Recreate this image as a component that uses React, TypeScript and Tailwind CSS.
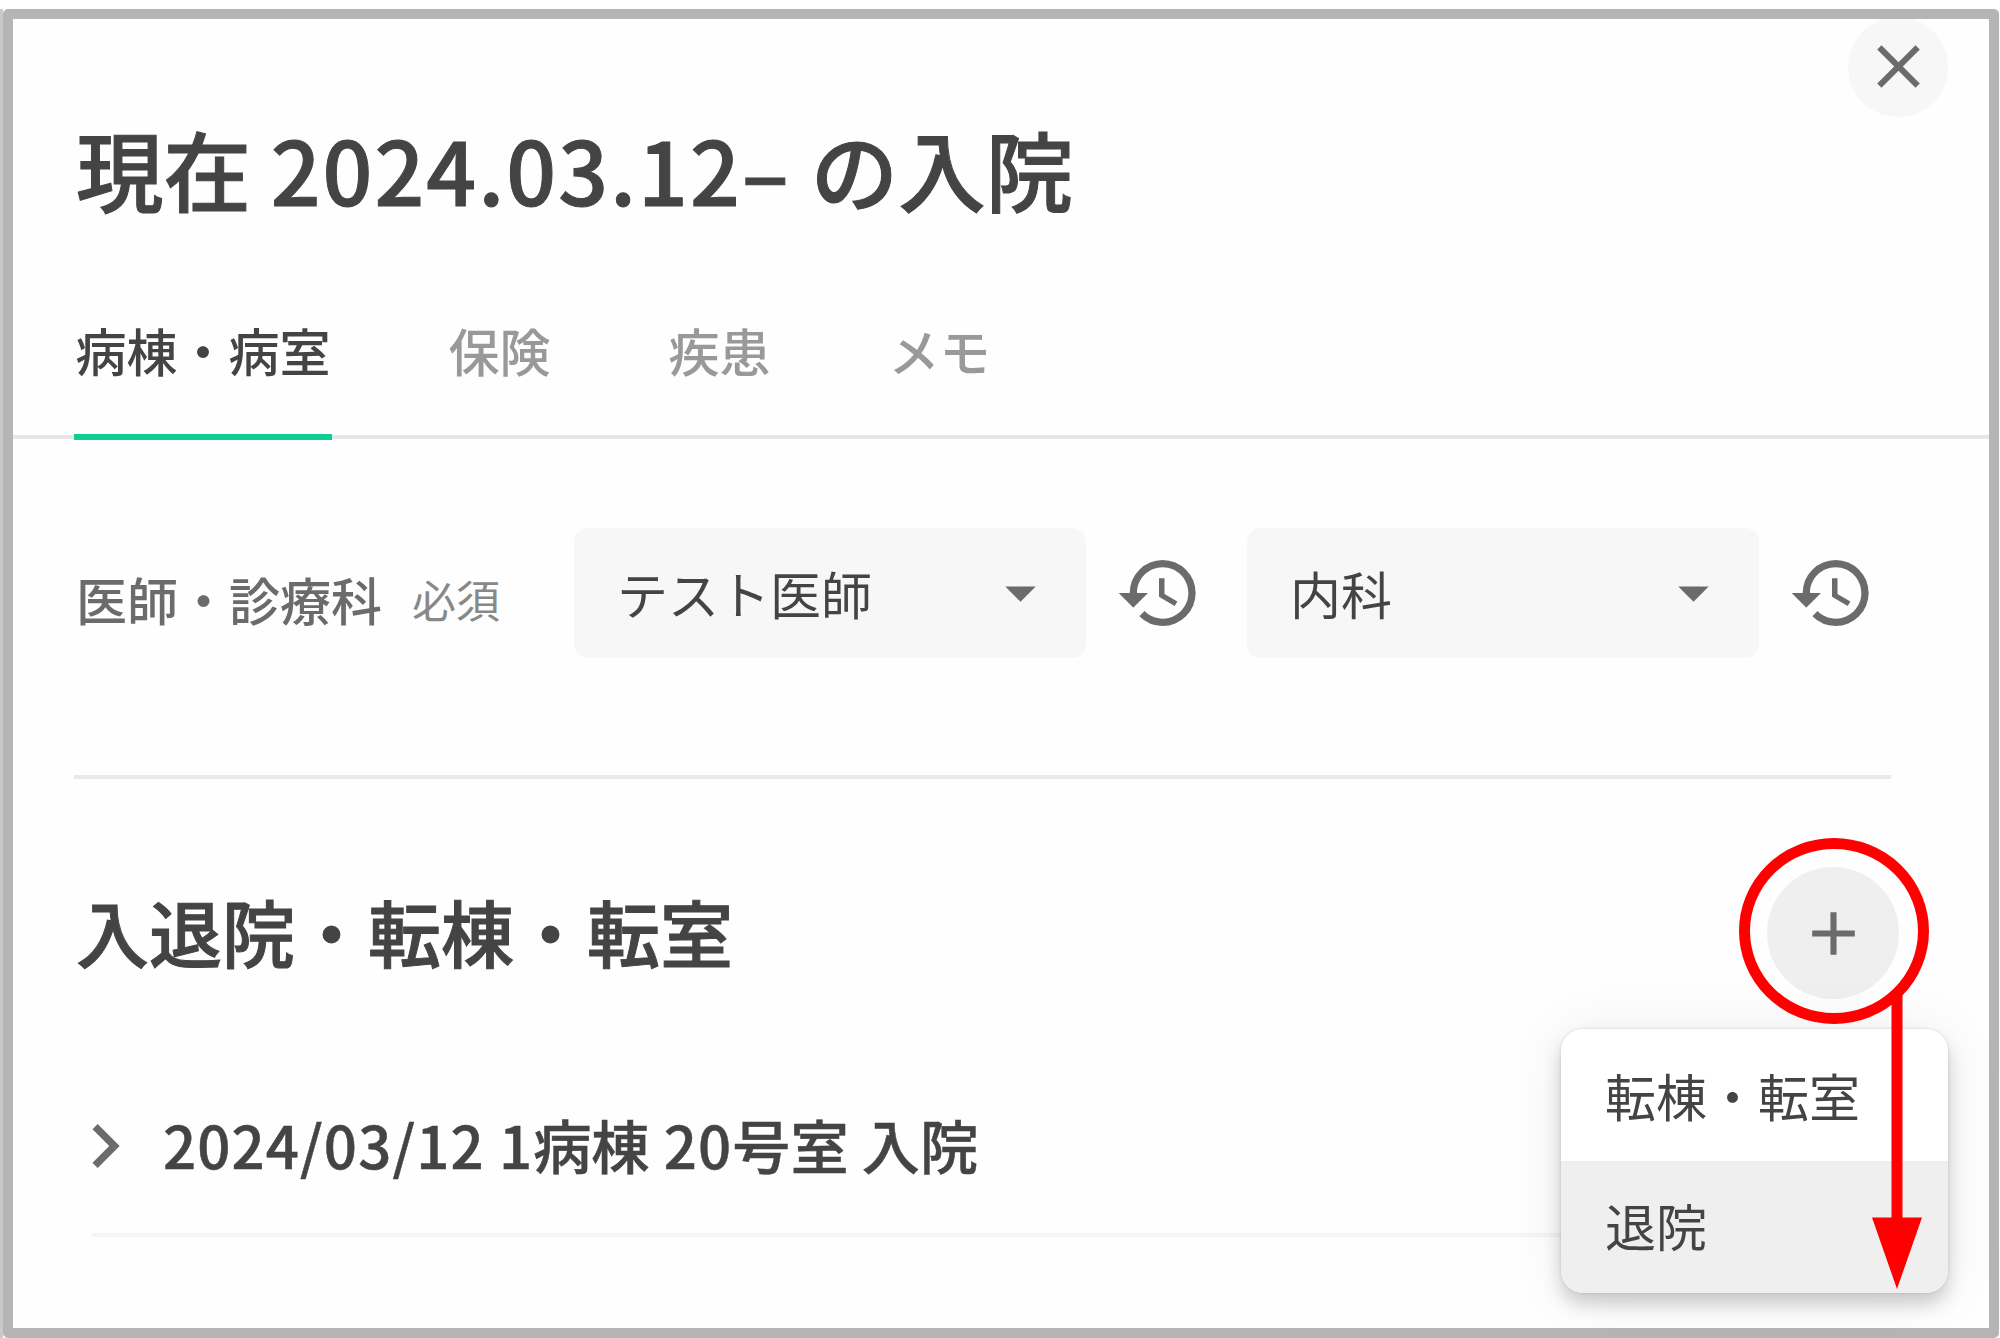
import { useState } from 'react';
import { MdAdd, MdArrowDropDown, MdChevronRight, MdClose, MdHistory } from 'react-icons/md';

const TABS = ['病棟・病室', '保険', '疾患', 'メモ'];
const ADD_ACTIONS = ['転棟・転室', '退院'];

function SelectField({ value }: { value: string }) {
  return (
    <div className="flex items-center">
      <button className="flex h-[130px] w-[512px] items-center justify-between rounded-[14px] bg-[#f7f7f7] pl-[43px] pr-[29px] text-[51px] text-[#444]">
        <span>{value}</span>
        <MdArrowDropDown className="relative -top-px size-[73px] text-[#6b6b6b]" />
      </button>
      <button className="ml-[29px]">
        <MdHistory className="size-[88px] text-[#6b6b6b]" />
      </button>
    </div>
  );
}

function AddMenu({ active, onSelect }: { active: string; onSelect: (v: string) => void }) {
  return (
    <ul className="absolute left-[1561px] top-[1029px] w-[387px] overflow-hidden rounded-[22px] bg-white text-[51px] text-[#444] shadow-[0_11px_18px_rgba(0,0,0,0.18),0_2px_60px_rgba(0,0,0,0.07),0_0_3px_rgba(0,0,0,0.14)]">
      {ADD_ACTIONS.map((label) => (
        <li
          key={label}
          onClick={() => onSelect(label)}
          className={`flex h-[132px] items-center pl-11 ${active === label ? 'bg-[#efefef] pb-[3px]' : 'bg-white'}`}
        >
          {label}
        </li>
      ))}
    </ul>
  );
}

// red circle round the add button, with an arrow down to the menu item
function Callout() {
  return (
    <svg
      className="pointer-events-none absolute left-[1730px] top-[830px]"
      width="210"
      height="470"
      viewBox="1730 830 210 470"
    >
      <ellipse cx="1834" cy="931" rx="89.5" ry="87.5" fill="none" stroke="#ff0000" strokeWidth="11" />
      <path d="M1897 993V1220" stroke="#ff0000" strokeWidth="11" />
      <path d="M1872 1217.5H1922L1897 1289Z" fill="#ff0000" />
    </svg>
  );
}

export default function App() {
  const [activeTab, setActiveTab] = useState('病棟・病室');
  const [activeAction, setActiveAction] = useState('退院');

  return (
    <div className="relative h-[1338px] w-[2000px] overflow-hidden bg-white pt-[9px] font-['Noto_Sans_CJK_JP',sans-serif]">
      <div className="flex h-[1329px] border-l-[3px] border-[#c9c9c9]">
        <section className="relative flex w-[1996px] flex-col overflow-hidden rounded-[5px] border-[10px] border-[#b5b5b5] bg-[#fefefe]">
          <button className="absolute right-[41px] -top-[2px] flex size-[100px] items-center justify-center rounded-full bg-[#f7f7f7]">
            <MdClose className="relative -top-px size-[73px] text-[#6b6b6b]" />
          </button>

          <h1 className="mt-[99px] h-[100px] pl-[63px] text-[87.5px] font-medium leading-[100px] text-[#444] [-webkit-text-stroke:1px_#444]">
            現在 <span className="tracking-[2px]">2024.03.12–</span> の入院
          </h1>

          <nav className="mt-[90px] flex h-[131px] gap-[115px] border-b-4 border-[#e6e6e6] pl-[61px]">
            {TABS.map((tab) => (
              <button
                key={tab}
                onClick={() => setActiveTab(tab)}
                className={`-mb-[5px] flex items-start border-b-[6px] px-[1.5px] pt-[10px] text-[51px] font-medium leading-[64px] ${activeTab === tab ? 'border-[#0ccf94] text-[#444]' : 'border-transparent text-[#999]'}`}
              >
                {tab}
              </button>
            ))}
          </nav>

          <div className="ml-[61px] mr-[98px] flex h-[340px] items-start border-b-4 border-[#e9e9e9] pt-[89px]">
            <div className="flex h-[130px] w-[500px] items-center pl-0.5 pt-[12px]">
              <span className="text-[51px] font-medium text-[#6b6b6b]">医師・診療科</span>
              <span className="ml-[30px] text-[44px] text-[#888]">必須</span>
            </div>
            <SelectField value="テスト医師" />
            <div className="ml-[44px]">
              <SelectField value="内科" />
            </div>
          </div>

          <div className="mt-[88px] flex h-[132px] items-center justify-between pl-[63px] pr-[90px]">
            <h2 className="relative -top-0.5 text-[73px] font-medium text-[#444] [-webkit-text-stroke:1px_#444]">
              入退院・転棟・転室
            </h2>
            <button className="flex size-[132px] items-center justify-center rounded-full bg-[#efefef]">
              <MdAdd className="size-[73px] text-[#6b6b6b]" />
            </button>
          </div>

          <div className="ml-[79px] mr-[79px] mt-[80px] flex h-[158px] items-center border-b-4 border-[#f5f5f5] pb-5">
            <MdChevronRight className="-ml-[31px] size-[88px] text-[#6b6b6b]" />
            <span className="ml-[14px] pb-1 text-[58.2px] font-medium text-[#444] [-webkit-text-stroke:0.5px_#444]">
              <span className="tracking-[1.1px]">2024/03/12 1</span>病棟
              <span className="tracking-[1.1px]"> 20</span>号室 入院
            </span>
          </div>
        </section>
      </div>

      <AddMenu active={activeAction} onSelect={setActiveAction} />
      <Callout />
    </div>
  );
}
